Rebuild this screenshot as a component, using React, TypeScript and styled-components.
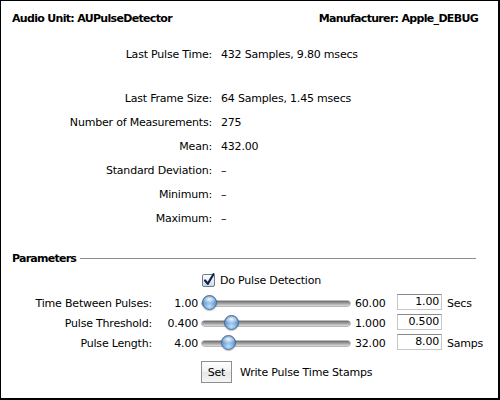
import React from "react";
import styled, { createGlobalStyle } from "styled-components";

const Global = createGlobalStyle`
  html, body { margin: 0; padding: 0; background: #fff; }
  * { box-sizing: border-box; }
`;

const Window = styled.div`
  width: 500px;
  height: 400px;
  background: #fff;
  border-style: solid;
  border-color: #000;
  border-width: 1px 2px 2px 1px;
  font-family: "DejaVu Sans", "Liberation Sans", sans-serif;
  font-size: 11px;
  letter-spacing: -0.2px;
  color: #000;
  display: flex;
  flex-direction: column;
`;

const Header = styled.div`
  display: flex;
  justify-content: space-between;
  align-items: center;
  height: 24px;
  margin-top: 5px;
  padding: 0 20px 0 11px;
  font-weight: bold;
  letter-spacing: -0.68px;
`;

const Stats = styled.div`
  display: flex;
  flex-direction: column;
  margin-top: 12px;
`;

const StatRow = styled.div<{ $gap?: boolean }>`
  display: grid;
  grid-template-columns: 211px 1fr;
  height: 24px;
  align-items: center;
  margin-top: ${(p) => (p.$gap ? "20px" : "0")};
`;

const StatLabel = styled.div`
  text-align: right;
`;

const StatValue = styled.div`
  padding-left: 9px;
`;

const GroupHeader = styled.div`
  display: flex;
  align-items: center;
  height: 16px;
  margin-top: 20px;
  padding: 0 22px 0 11px;
  gap: 4px;
  font-weight: bold;
  letter-spacing: -0.75px;
`;

const GroupLine = styled.div`
  flex: 1;
  height: 1px;
  background: #8c8c8c;
`;

const Params = styled.div`
  display: grid;
  grid-template-columns: 151px 50px 148px 47px 45px auto;
  grid-auto-rows: auto;
  margin-top: 6px;
`;

const FullRow = styled.div<{ $top?: number; $h?: number; $left?: number; $bottom?: number }>`
  grid-column: 3 / -1;
  display: flex;
  align-items: center;
  gap: 5px;
  height: ${(p) => p.$h ?? 16}px;
  margin-top: ${(p) => p.$top ?? 0}px;
  margin-left: ${(p) => p.$left ?? 0}px;
  margin-bottom: ${(p) => p.$bottom ?? 0}px;
`;

const Cell = styled.div`
  height: 20px;
  display: flex;
  align-items: center;
`;

const ParamLabel = styled(Cell)`
  justify-content: flex-end;
`;

const MinVal = styled(Cell)`
  justify-content: flex-end;
  padding-right: 4px;
`;

const MaxVal = styled(Cell)`
  padding-left: 5px;
`;

const Unit = styled(Cell)`
  padding-left: 5px;
`;

const SliderCell = styled(Cell)`
  position: relative;
`;

const Track = styled.div`
  width: 100%;
  height: 5px;
  border-radius: 3px;
  background: linear-gradient(#6e6e6e, #a9a9a9 55%, #dcdcdc);
  box-shadow: 0 0 0 0.5px #777;
`;

const Thumb = styled.div`
  position: absolute;
  top: 50%;
  width: 15px;
  height: 15px;
  margin-top: -8px;
  border-radius: 50%;
  border: 1px solid #47678f;
  background:
    radial-gradient(ellipse 60% 35% at 50% 25%, rgba(255,255,255,0.95), rgba(255,255,255,0) 100%),
    radial-gradient(circle at 50% 80%, #bfe0fb 0%, #6fa6dc 45%, #3b74b8 100%);
  box-shadow: 0 1px 1px rgba(0,0,0,0.25);
`;

const BoxCell = styled(Cell)`
  padding-bottom: 3px;
`;

const TextBox = styled.div`
  width: 45px;
  height: 16px;
  background: #fff;
  border: 1px solid #c6c6c6;
  border-top-color: #8a8a8a;
  text-align: right;
  padding-right: 2px;
  line-height: 14px;
`;

const Button = styled.div`
  width: 31px;
  height: 22px;
  display: flex;
  align-items: center;
  justify-content: center;
  border: 1px solid #8e8e8e;
  background: linear-gradient(#ffffff, #f1f1f1 50%, #e6e6e6 51%, #f6f6f6);
  box-shadow: inset 0 1px 0 #fff;
`;

const CheckLabel = styled.span`
  margin-left: -1px;
`;

const ButtonLabel = styled.span`
  margin-left: 3px;
`;

function CheckBox() {
  return (
    <svg width="14" height="14" viewBox="0 0 14 14">
      <defs>
        <linearGradient id="cbg" x1="0" y1="0" x2="0" y2="1">
          <stop offset="0" stopColor="#ffffff" />
          <stop offset="0.5" stopColor="#e9eef5" />
          <stop offset="1" stopColor="#c9d6e6" />
        </linearGradient>
      </defs>
      <rect x="0.5" y="1.5" width="12" height="12" rx="1.5" fill="url(#cbg)" stroke="#6f7a8a" />
      <path d="M3 7.5 L5.8 10.8 L11.5 1.2" fill="none" stroke="#0f2447" strokeWidth="2.2" strokeLinecap="round" strokeLinejoin="round" />
    </svg>
  );
}

type P = { label: string; min: number; max: number; value: number; digits: number; unit?: string };

const params: P[] = [
  { label: "Time Between Pulses:", min: 1, max: 60, value: 1, digits: 2, unit: "Secs" },
  { label: "Pulse Threshold:", min: 0.4, max: 1, value: 0.5, digits: 3 },
  { label: "Pulse Length:", min: 4, max: 32, value: 8, digits: 2, unit: "Samps" },
];

const stats: [string, string, boolean?][] = [
  ["Last Pulse Time:", "432 Samples, 9.80 msecs"],
  ["Last Frame Size:", "64 Samples, 1.45 msecs", true],
  ["Number of Measurements:", "275"],
  ["Mean:", "432.00"],
  ["Standard Deviation:", "–"],
  ["Minimum:", "–"],
  ["Maximum:", "–"],
];

export default function App() {
  const trackW = 148;
  const thumbW = 15;
  return (
    <>
      <Global />
      <Window>
        <Header>
          <span>Audio Unit: AUPulseDetector</span>
          <span>Manufacturer: Apple_DEBUG</span>
        </Header>
        <Stats>
          {stats.map(([l, v, g]) => (
            <StatRow key={l} $gap={g}>
              <StatLabel>{l}</StatLabel>
              <StatValue>{v}</StatValue>
            </StatRow>
          ))}
        </Stats>
        <GroupHeader>
          <span>Parameters</span>
          <GroupLine />
        </GroupHeader>
        <Params>
          <FullRow $h={16} $bottom={5}>
            <CheckBox />
            <CheckLabel>Do Pulse Detection</CheckLabel>
          </FullRow>
          {params.map((p) => {
            const left = ((p.value - p.min) / (p.max - p.min)) * (trackW - thumbW);
            return (
              <React.Fragment key={p.label}>
                <ParamLabel>{p.label}</ParamLabel>
                <MinVal>{p.min.toFixed(p.digits)}</MinVal>
                <SliderCell>
                  <Track />
                  <Thumb style={{ left: `${left}px` }} />
                </SliderCell>
                <MaxVal>{p.max.toFixed(p.digits)}</MaxVal>
                <BoxCell>
                  <TextBox>{p.value.toFixed(p.digits)}</TextBox>
                </BoxCell>
                <Unit>{p.unit ?? ""}</Unit>
              </React.Fragment>
            );
          })}
          <FullRow $top={8} $h={22} $left={-1}>
            <Button>Set</Button>
            <ButtonLabel>Write Pulse Time Stamps</ButtonLabel>
          </FullRow>
        </Params>
      </Window>
    </>
  );
}
